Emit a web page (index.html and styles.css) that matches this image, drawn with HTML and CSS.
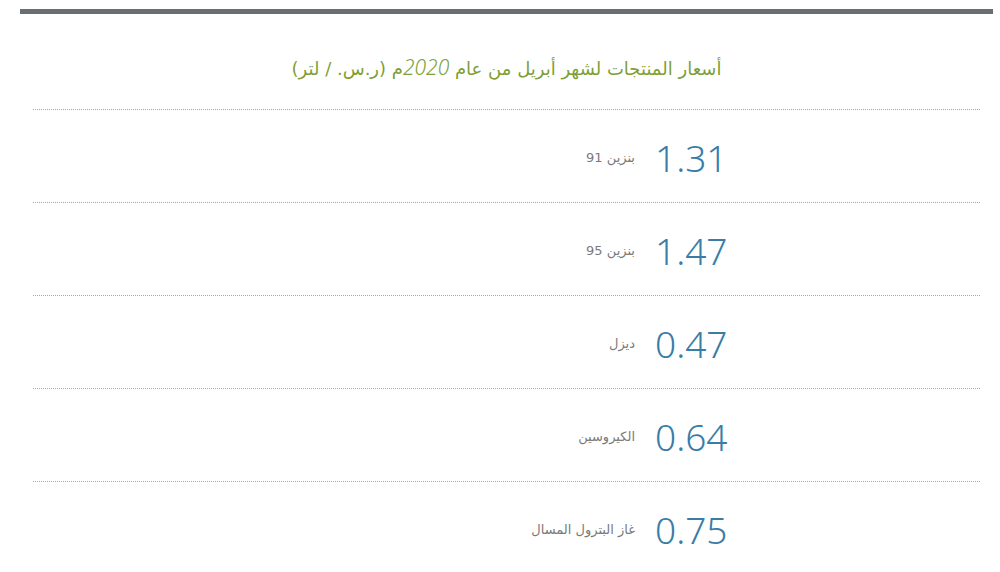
FILE: index.html
```html
<!DOCTYPE html>
<html lang="ar">
<head>
<meta charset="utf-8">
<title>أسعار المنتجات</title>
<link rel="stylesheet" href="styles.css">
</head>
<body>
<div class="page">
  <div class="topbar"></div>
  <h2 class="title" dir="rtl">أسعار المنتجات لشهر أبريل من عام <span class="year">2020</span>م (ر.س. / لتر)</h2>
  <div class="list">
    <div class="row"><span class="label" dir="rtl">بنزين 91</span><span class="value">1.31</span></div>
    <div class="row"><span class="label" dir="rtl">بنزين 95</span><span class="value">1.47</span></div>
    <div class="row"><span class="label" dir="rtl">ديزل</span><span class="value">0.47</span></div>
    <div class="row"><span class="label" dir="rtl">الكيروسين</span><span class="value">0.64</span></div>
    <div class="row"><span class="label" dir="rtl">غاز البترول المسال</span><span class="value">0.75</span></div>
  </div>
</div>
</body>
</html>
```
FILE: styles.css
```css
html, body {
  margin: 0;
  padding: 0;
  background: #ffffff;
}
body {
  font-family: "DejaVu Sans", "Noto Sans", sans-serif;
}
.page {
  margin: 9px 7px 0 20px;
}
.topbar {
  height: 5px;
  background: #6b6e70;
}
.title {
  margin: 0;
  padding: 40px 0 25px;
  line-height: 30px;
  text-align: center;
  font-size: 18px;
  font-weight: normal;
  color: #7f9f36;
  font-family: "DejaVu Sans", sans-serif;
}
.title .year {
  font-family: "Noto Sans", sans-serif;
  font-style: italic;
  font-weight: 300;
  font-size: 21px;
  line-height: 20px;
}
.list {
  padding: 0 13px;
}
.row {
  display: flex;
  align-items: center;
  gap: 20px;
  height: 92px;
  border-top: 1px dotted #a8a8a8;
}
.label {
  flex: 0 0 602px;
  text-align: right;
  font-size: 13px;
  color: #7a7a7a;
  font-family: "DejaVu Sans", sans-serif;
  margin-top: 2px;
}
.value {
  font-family: "Noto Sans", sans-serif;
  font-weight: 300;
  font-size: 37px;
  color: #3a7ca8;
  line-height: 1;
  margin-top: 2px;
}
```
